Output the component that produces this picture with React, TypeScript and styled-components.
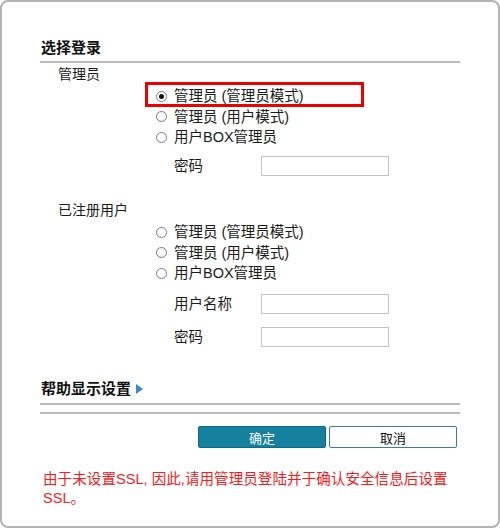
import styled, { createGlobalStyle } from 'styled-components';

const GlobalStyle = createGlobalStyle`
  html, body {
    margin: 0;
    padding: 0;
    background: #ffffff;
  }
  body {
    font-family: "Liberation Sans", "Noto Sans CJK SC", sans-serif;
    color: #1a1a1a;
  }
`;

interface RadioOption {
  label: string;
  checked?: boolean;
  highlight?: boolean;
}

interface Field {
  label: string;
}

interface LoginGroup {
  title: string;
  options: RadioOption[];
  fields: Field[];
  gap: number;
}

const groups: LoginGroup[] = [
  {
    title: '管理员',
    options: [
      { label: '管理员 (管理员模式)', checked: true, highlight: true },
      { label: '管理员 (用户模式)' },
      { label: '用户BOX管理员' },
    ],
    fields: [{ label: '密码' }],
    gap: 23,
  },
  {
    title: '已注册用户',
    options: [
      { label: '管理员 (管理员模式)' },
      { label: '管理员 (用户模式)' },
      { label: '用户BOX管理员' },
    ],
    fields: [{ label: '用户名称' }, { label: '密码' }],
    gap: 0,
  },
];

export default function App() {
  return (
    <>
      <GlobalStyle />
      <Frame>
        <Heading>选择登录</Heading>
        <Rule />

        {groups.map((g, gi) => (
          <Group key={gi} $gap={g.gap}>
            <GroupLabel>{g.title}</GroupLabel>
            <RadioList>
              {g.options.map((o, oi) => (
                <RadioRow key={oi} $highlight={o.highlight}>
                  <RadioDot $checked={o.checked} />
                  <RadioText>{o.label}</RadioText>
                </RadioRow>
              ))}
            </RadioList>
            <Fields $first={gi === 0}>
              {g.fields.map((f, fi) => (
                <FieldRow key={fi}>
                  <FieldLabel>{f.label}</FieldLabel>
                  <TextInput type={f.label === '密码' ? 'password' : 'text'} />
                </FieldRow>
              ))}
            </Fields>
          </Group>
        ))}

        <HelpHeading>
          帮助显示设置
          <Arrow viewBox="0 0 7 10" width={7} height={10}>
            <path d="M0 0 L7 5 L0 10 Z" fill="#3f87c9" />
          </Arrow>
        </HelpHeading>
        <Rule $top={4} />
        <Rule $top={7} />

        <Actions>
          <PrimaryButton>确定</PrimaryButton>
          <SecondaryButton>取消</SecondaryButton>
        </Actions>

        <Warning>
          由于未设置SSL, 因此,请用管理员登陆并于确认安全信息后设置SSL。
        </Warning>
      </Frame>
    </>
  );
}

const Frame = styled.div`
  width: 500px;
  height: 528px;
  box-sizing: border-box;
  border: 2px solid #b3b3b3;
  border-radius: 8px;
  padding: 36px 38px 0 38px;
  display: flex;
  flex-direction: column;
  background: #fff;
`;

const Heading = styled.div`
  font-size: 15px;
  font-weight: 700;
  line-height: 20px;
  color: #111;
  padding-left: 1px;
`;

const Rule = styled.div<{ $top?: number }>`
  height: 0;
  border-top: 2px solid #bcbcbc;
  margin-top: ${(p) => (p.$top ?? 3)}px;
`;

const Group = styled.div<{ $gap: number }>`
  display: flex;
  flex-direction: column;
  margin-bottom: ${(p) => p.$gap}px;
`;

const GroupLabel = styled.div`
  font-size: 14px;
  line-height: 20px;
  padding-left: 18px;
  margin-top: 1px;
`;

const RadioList = styled.div`
  display: flex;
  flex-direction: column;
  padding-left: 116px;
  margin-top: 2px;
`;

const RadioRow = styled.div<{ $highlight?: boolean }>`
  position: relative;
  display: flex;
  align-items: center;
  gap: 7px;
  height: 20px;

  & + & {
    margin-top: 0.5px;
  }

  ${(p) =>
    p.$highlight &&
    `
    &::before {
      content: '';
      position: absolute;
      left: -11px;
      width: 213px;
      top: -4px;
      bottom: -1px;
      border: 3px solid #ee0000;
    }
  `}
`;

const RadioDot = styled.span<{ $checked?: boolean }>`
  width: 11px;
  height: 11px;
  box-sizing: border-box;
  border: 1px solid #7a7a7a;
  border-radius: 50%;
  background: #fff;
  display: flex;
  align-items: center;
  justify-content: center;

  &::after {
    content: '';
    width: 5px;
    height: 5px;
    border-radius: 50%;
    background: ${(p) => (p.$checked ? '#111' : 'transparent')};
  }
`;

const RadioText = styled.span`
  font-size: 14.5px;
  line-height: 20px;
  white-space: nowrap;
`;

const Fields = styled.div<{ $first?: boolean }>`
  display: flex;
  flex-direction: column;
  gap: 13px;
  padding-left: 134px;
  margin-top: ${(p) => (p.$first ? 9 : 11)}px;
`;

const FieldRow = styled.div`
  display: flex;
  align-items: center;
  height: 20px;
`;

const FieldLabel = styled.span`
  width: 87px;
  font-size: 14.5px;
  line-height: 20px;
`;

const TextInput = styled.input`
  width: 128px;
  height: 20px;
  box-sizing: border-box;
  border: 1px solid #c4c4c4;
  padding: 0 3px;
  margin: 0;
  outline: none;
  font-size: 13px;
`;

const HelpHeading = styled.div`
  display: flex;
  align-items: center;
  gap: 5px;
  font-size: 15px;
  font-weight: 700;
  line-height: 20px;
  color: #111;
  margin-top: 32px;
  padding-left: 1px;
`;

const Arrow = styled.svg`
  display: block;
`;

const Actions = styled.div`
  display: flex;
  justify-content: flex-end;
  gap: 3px;
  margin-top: 12px;
  padding-right: 3px;
`;

const BaseButton = styled.button`
  width: 128px;
  height: 22px;
  box-sizing: border-box;
  border-radius: 2px;
  font-family: "Liberation Sans", "Noto Sans CJK SC", sans-serif;
  font-size: 13px;
  padding: 0;
  cursor: pointer;
`;

const PrimaryButton = styled(BaseButton)`
  background: #15819f;
  border: 1px solid #0f6882;
  color: #fff;
`;

const SecondaryButton = styled(BaseButton)`
  background: #fff;
  border: 1px solid #3a7f96;
  color: #111;
`;

const Warning = styled.div`
  margin-top: 22px;
  padding-left: 3px;
  font-size: 14.6px;
  line-height: 19px;
  color: #ff1a1a;
`;
